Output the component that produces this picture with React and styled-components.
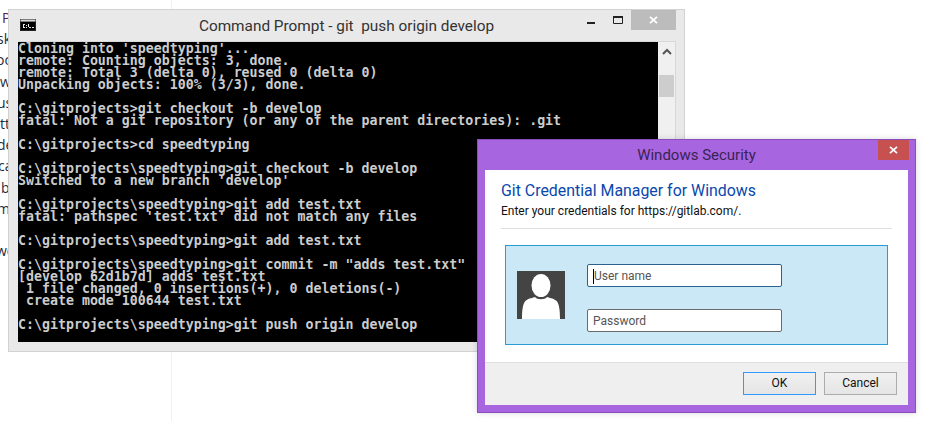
import React from 'react';
import styled, { createGlobalStyle } from 'styled-components';

const GlobalStyle = createGlobalStyle`
  html, body {
    margin: 0;
    padding: 0;
    background: #fff;
    overflow: hidden;
  }
`;

const Desktop = styled.div`
  position: relative;
  width: 925px;
  height: 421px;
  overflow: hidden;
  background: #fff;
`;

const Sidebar = styled.div`
  width: 172px;
  height: 421px;
  box-sizing: border-box;
  padding-top: 7px;
  border-right: 1px solid #f1f1f1;
`;

const SideItem = styled.div`
  width: 8px;
  height: 21.2px;
  overflow: hidden;
  white-space: nowrap;
  font: 14px/21px "Open Sans", sans-serif;
  text-indent: ${(p) => p.$indent}px;
  color: ${(p) => (p.$link ? '#5b1a4a' : '#1c2b3a')};
`;

const CmdWindow = styled.div`
  position: absolute;
  left: 8px;
  top: 9px;
  width: 677px;
  height: 343px;
  box-sizing: border-box;
  background: #e9e9e9;
  border: 1px solid #d2d2d2;
  display: flex;
  flex-direction: column;
`;

const CmdTitleBar = styled.div`
  height: 31px;
  flex: none;
  display: flex;
  align-items: flex-start;
  padding: 0 8px 0 11px;
`;

const CmdIcon = styled.svg`
  width: 16px;
  height: 12px;
  margin-top: 9px;
  flex: none;
`;

const CmdTitle = styled.div`
  flex: 1;
  padding: 6px 0 0 78px;
  text-align: center;
  font: 15.35px/20px Roboto, sans-serif;
  color: #333;
  white-space: pre;
`;

const Controls = styled.div`
  display: flex;
  align-items: flex-start;
  flex: none;
`;

const ControlGlyph = styled.svg`
  width: 26px;
  height: 20px;
  flex: none;
`;

const CloseButton = styled.div`
  width: ${(p) => p.$w}px;
  height: 20px;
  background: ${(p) => p.$bg};
  display: flex;
  align-items: center;
  justify-content: center;
`;

const CmdBody = styled.div`
  flex: 1;
  display: flex;
  margin: 0 8px 9px 9px;
  border-top: 1px solid #d8d8d8;
`;

const Terminal = styled.pre`
  box-sizing: border-box;
  width: 640px;
  height: 300px;
  flex: none;
  margin: 0;
  padding-top: 1px;
  overflow: hidden;
  background: #000;
  color: #cccccc;
  font: bold 13.28px/12px "DejaVu Sans Mono", monospace;
`;

const Scrollbar = styled.div`
  width: 17px;
  flex: none;
  background: #f0f0f0;
  border-right: 1px solid #d8d8d8;
  display: flex;
  flex-direction: column;
  align-items: center;
`;

const ScrollArrow = styled.svg`
  width: 16px;
  height: 16px;
  margin-top: 2px;
  flex: none;
`;

const ScrollThumb = styled.div`
  width: 15px;
  height: 22px;
  margin-top: 15px;
  background: #cdcdcd;
`;

const Dialog = styled.div`
  position: absolute;
  left: 477px;
  top: 139px;
  width: 439px;
  height: 274px;
  box-sizing: border-box;
  background: #a865e0;
  border: 1px solid #8a4fbd;
  box-shadow: 0 0 6px rgba(0, 0, 0, 0.15);
  display: flex;
  flex-direction: column;
`;

const DialogTitleBar = styled.div`
  height: 30px;
  flex: none;
  position: relative;
  text-align: center;
  font: 15px/30px Roboto, sans-serif;
  color: #3a2352;
`;

const DialogClose = styled(CloseButton)`
  position: absolute;
  right: 6px;
  top: 0;
`;

const DialogBody = styled.div`
  flex: 1;
  margin: 0 7px 7px 7px;
  background: #fff;
  display: flex;
  flex-direction: column;
`;

const Content = styled.div`
  flex: 1;
  padding: 10px 16px 0 16px;
`;

const Heading = styled.div`
  font: 15.9px/22px Roboto, sans-serif;
  color: #0a47ad;
`;

const SubHeading = styled.div`
  font: 12px/18px Roboto, sans-serif;
  color: #111;
  padding-bottom: 8px;
  border-bottom: 1px solid #dfdfdf;
`;

const CredentialPanel = styled.div`
  box-sizing: border-box;
  width: 383px;
  height: 100px;
  margin: 16px 0 0 4px;
  background: #cbe8f6;
  border: 1px solid #2b9bd6;
  display: flex;
  align-items: center;
  padding-left: 11px;
`;

const Avatar = styled.svg`
  width: 48px;
  height: 48px;
  flex: none;
`;

const Fields = styled.div`
  margin: 6px 0 0 22px;
  display: flex;
  flex-direction: column;
  gap: 22px;
`;

const Field = styled.div`
  box-sizing: border-box;
  width: 195px;
  height: 23px;
  border: 1px solid ${(p) => (p.$focused ? '#2c628f' : '#6a6a6a')};
  border-radius: 2px;
  background: #fff;
  padding: 1px 0 0 5px;
  font: 12px/20px Roboto, sans-serif;
  color: #555;
  display: flex;
  align-items: center;
`;

const Caret = styled.span`
  width: 1px;
  height: 15px;
  background: #000;
  flex: none;
`;

const Footer = styled.div`
  height: 43px;
  flex: none;
  box-sizing: border-box;
  background: #efefef;
  border-top: 1px solid #dfdfdf;
  display: flex;
  justify-content: flex-end;
  align-items: flex-start;
  gap: 8px;
  padding: 9px 11px 0 0;
`;

const Button = styled.div`
  box-sizing: border-box;
  width: 73px;
  height: 23px;
  border: 1px solid ${(p) => (p.$primary ? '#3399ff' : '#acacac')};
  background: linear-gradient(#f0f0f0, #e5e5e5);
  text-align: center;
  font: 12px/21px Roboto, sans-serif;
  color: #111;
`;

// fragments of the page behind the windows, only their first pixels show
const sideItems = [
  { text: 'P', indent: 2 },
  { text: 'sk', indent: -3 },
  { text: 'oc', indent: -4 },
  { text: 'w', indent: 0 },
  { text: 'us', indent: -3 },
  { text: 'ttu', indent: 0 },
  { text: 'de', indent: -3 },
  { text: 'ca', indent: -2 },
  { text: 'b', indent: 1 },
  { text: 'm', indent: -3 },
  { text: '\u00a0', indent: 0 },
  { text: 'wo', indent: -4 },
];

const terminalText = `Cloning into 'speedtyping'...
remote: Counting objects: 3, done.
remote: Total 3 (delta 0), reused 0 (delta 0)
Unpacking objects: 100% (3/3), done.

C:\\gitprojects>git checkout -b develop
fatal: Not a git repository (or any of the parent directories): .git

C:\\gitprojects>cd speedtyping

C:\\gitprojects\\speedtyping>git checkout -b develop
Switched to a new branch 'develop'

C:\\gitprojects\\speedtyping>git add test.txt
fatal: pathspec 'test.txt' did not match any files

C:\\gitprojects\\speedtyping>git add test.txt

C:\\gitprojects\\speedtyping>git commit -m "adds test.txt"
[develop 62d1b7d] adds test.txt
 1 file changed, 0 insertions(+), 0 deletions(-)
 create mode 100644 test.txt

C:\\gitprojects\\speedtyping>git push origin develop`;

const CloseGlyph = () => (
  <svg width="9" height="8" viewBox="0 0 9 8">
    <path d="M1 0.8 L8 7.2 M8 0.8 L1 7.2" stroke="#fff" strokeWidth="1.7" fill="none" />
  </svg>
);

const App = () => (
  <Desktop>
    <GlobalStyle />
    <Sidebar>
      {sideItems.map((item, i) => (
        <SideItem key={i} $link={i === 0} $indent={item.indent}>{item.text}</SideItem>
      ))}
    </Sidebar>

    <CmdWindow>
      <CmdTitleBar>
        <CmdIcon viewBox="0 0 16 12">
          <rect width="16" height="12" fill="#222" />
          <rect x="0.5" y="0.5" width="15" height="2" fill="#d8d8d8" />
          <rect x="1" y="3" width="14" height="8" fill="#000" />
          <path d="M3 5h2v1H3zM3 6h1v2H3zM3 8h2v1H3zM6 6h1v1H6zM6 8h1v1H6zM8 5h1v3H8zM9 8h2v1H9zM12 8h2v1h-2z" fill="#e6e6e6" />
        </CmdIcon>
        <CmdTitle>Command Prompt - git  push origin develop</CmdTitle>
        <Controls>
          <ControlGlyph viewBox="0 0 26 20">
            <rect x="8" y="12" width="8" height="2" fill="#222" />
          </ControlGlyph>
          <ControlGlyph viewBox="0 0 26 20">
            <path d="M8.5 6.5h9v7h-9z" fill="none" stroke="#222" strokeWidth="1" />
            <rect x="8" y="6" width="10" height="2" fill="#222" />
          </ControlGlyph>
          <CloseButton $w={45} $bg="#bcbcbc"><CloseGlyph /></CloseButton>
        </Controls>
      </CmdTitleBar>
      <CmdBody>
        <Terminal>{terminalText}</Terminal>
        <Scrollbar>
          <ScrollArrow viewBox="0 0 16 16">
            <path d="M4 10 L8 6 L12 10" stroke="#555" strokeWidth="2" fill="none" />
          </ScrollArrow>
          <ScrollThumb />
        </Scrollbar>
      </CmdBody>
    </CmdWindow>

    <Dialog>
      <DialogTitleBar>
        Windows Security
        <DialogClose $w={31} $bg="#c75050"><CloseGlyph /></DialogClose>
      </DialogTitleBar>
      <DialogBody>
        <Content>
          <Heading>Git Credential Manager for Windows</Heading>
          <SubHeading>Enter your credentials for https://gitlab.com/.</SubHeading>
          <CredentialPanel>
            <Avatar viewBox="0 0 48 48">
              <rect width="48" height="48" fill="#444" />
              <ellipse cx="24" cy="14.5" rx="9.5" ry="11.5" fill="#fff" />
              <path d="M5 48 C5 38 6 32 9 29.5 C12 27 16 27 18 26 C20 29 28 29 30 26 C32 27 36 27 39 29.5 C42 32 43 38 43 48 Z" fill="#fff" />
            </Avatar>
            <Fields>
              <Field $focused><Caret />User name</Field>
              <Field>Password</Field>
            </Fields>
          </CredentialPanel>
        </Content>
        <Footer>
          <Button $primary>OK</Button>
          <Button>Cancel</Button>
        </Footer>
      </DialogBody>
    </Dialog>
  </Desktop>
);

export default App;
